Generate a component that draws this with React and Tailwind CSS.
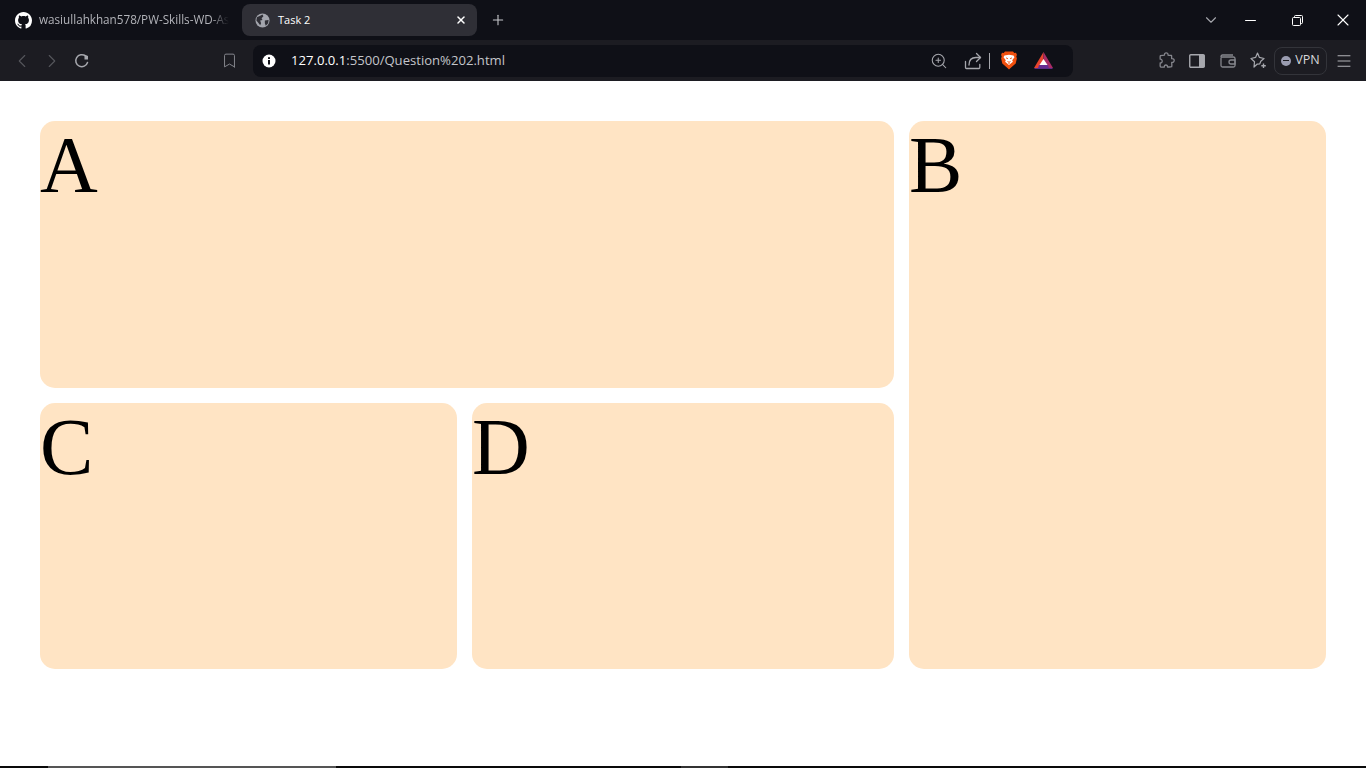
import React from 'react';
import { ChevronLeft, ChevronRight, ChevronDown, Bookmark, Plus, X, Minus, ZoomIn, Menu } from 'lucide-react';

const GithubMark = () => (
  <svg width="17" height="17" viewBox="0 0 16 16" fill="#ffffff">
    <path d="M8 0C3.58 0 0 3.58 0 8c0 3.54 2.29 6.53 5.47 7.59.4.07.55-.17.55-.38 0-.19-.01-.82-.01-1.49-2.01.37-2.53-.49-2.69-.94-.09-.23-.48-.94-.82-1.13-.28-.15-.68-.52-.01-.53.63-.01 1.08.58 1.23.82.72 1.21 1.87.87 2.33.66.07-.52.28-.87.51-1.07-1.78-.2-3.64-.89-3.64-3.95 0-.87.31-1.59.82-2.15-.08-.2-.36-1.02.08-2.12 0 0 .67-.21 2.2.82.64-.18 1.32-.27 2-.27s1.36.09 2 .27c1.53-1.04 2.2-.82 2.2-.82.44 1.1.16 1.92.08 2.12.51.56.82 1.27.82 2.15 0 3.07-1.87 3.75-3.65 3.95.29.25.54.73.54 1.48 0 1.07-.01 1.93-.01 2.2 0 .21.15.46.55.38A8.01 8.01 0 0 0 16 8c0-4.42-3.58-8-8-8z" />
  </svg>
);

const GlobeFilled = () => (
  <svg width="15" height="15" viewBox="0 0 16 16">
    <circle cx="8" cy="8" r="7.5" fill="#a3a5ad" />
    <path d="M2 4.500 5.500 3 8 1.500 9 3.500 7 5.500 8 7.500 5.500 8 6.500 11 5.500 13 3.500 10.500 1.500 8zM10.500 8 14.500 7.500 14 11 11.500 13.500 10.500 11z" fill="#2f2f36" />
  </svg>
);

const InfoDot = () => (
  <svg width="14" height="14" viewBox="0 0 14 14">
    <circle cx="7" cy="7" r="6.500" fill="#ffffff" />
    <rect x="6" y="6" width="2" height="4.500" fill="#0f1017" />
    <rect x="6" y="3.200" width="2" height="1.800" fill="#0f1017" />
  </svg>
);

const ReloadIcon = () => (
  <svg width="16" height="16" viewBox="0 0 16 16" fill="none" stroke="#a6a7ad" strokeWidth="1.500" strokeLinecap="round">
    <path d="M13.500 9.500A6 6 0 1 1 11.500 3" />
    <path d="M10.500 1.500 14 3v3.500h-3.500z" fill="#a6a7ad" stroke="none" />
  </svg>
);

const ShareIcon = () => (
  <svg width="18" height="18" viewBox="0 0 18 18" fill="none" stroke="#a6a7ad" strokeWidth="1.300" strokeLinecap="round" strokeLinejoin="round">
    <path d="M1.500 9.500v6a1 1 0 0 0 1 1h12.500a1 1 0 0 0 .8-1v-3" />
    <path d="M5 13c0-5 3-7.500 7-7.500h4.500" />
    <path d="M12.500 1.500l4 4-4 4" />
  </svg>
);

const BraveLogo = () => (
  <svg width="16" height="19" viewBox="0 0 16 19">
    <path d="M4 .5h8l1.300 1.500 1.700-.3.9 2-.6 2 .6 1.600-1.200 5.200-4 3.600L8 18.500l-2.700-2.400-4-3.600L.1 7.300l.6-1.600-.6-2 .9-2 1.700.3z" fill="#f1500e" />
    <path d="M3.500 4.500 8 3.800l4.500.7 1 1.800-2.300 3 .7 1.500-3.900 3.200-3.900-3.200.7-1.500-2.300-3z" fill="#ffffff" />
    <path d="M5 6.800 7 7.800M11 6.800 9 7.800M6.500 10 8 11.500 9.500 10M8 11.500v1.500" stroke="#f1500e" strokeWidth="0.900" fill="none" />
  </svg>
);

const BatLogo = () => (
  <svg width="19" height="17" viewBox="0 0 19 17">
    <path d="M9.500 0 0 16h5.500L9.500 9z" fill="#e8442d" />
    <path d="M9.500 0 19 16h-5.500L9.500 9z" fill="#a92c66" />
    <path d="M0 16h19l-1 1H1z" fill="#5c2a86" />
    <path d="M5 13h9l.9 3H4z" fill="#662d91" />
    <path d="M9.500 7 13.500 13h-8z" fill="#ffffff" />
  </svg>
);

const PuzzleIcon = () => (
  <svg width="17" height="17" viewBox="0 0 17 17" fill="none" stroke="#85868d" strokeWidth="1.300" strokeLinejoin="round">
    <path d="M6.500 3.200C6.200 1.600 7.200.8 8.200.8s2.100.9 1.800 2.400c1.300.3 2.500.2 3.500.3.200 1 .1 2.100.2 3.200 1.500-.3 2.500.7 2.500 1.800s-1 2.200-2.500 1.900c0 1.500.4 3 0 4.300-1.500.5-3 .2-4.200.3.100-1.300-.6-2-1.600-2s-1.800.7-1.600 2c-1.300 0-2.700.3-3.900-.2-.6-1.300-.1-2.700-.2-4 1.200.2 2-.6 2-1.600S3.400 6.900 2.200 7.100c0-1.200-.3-2.400.2-3.500 1.300-.5 2.800-.2 4.100-.4z" />
  </svg>
);

const SidebarIcon = () => (
  <svg width="16" height="14" viewBox="0 0 16 14">
    <rect x="0.750" y="0.750" width="14.500" height="12.500" rx="1" fill="none" stroke="#a6a7ad" strokeWidth="1.400" />
    <rect x="10" y="1" width="5.500" height="12" fill="#a6a7ad" />
  </svg>
);

const WalletIcon = () => (
  <svg width="16" height="14" viewBox="0 0 16 14" fill="none" stroke="#85868d" strokeWidth="1.300">
    <path d="M1 3.500V11.500A1.500 1.500 0 0 0 2.500 13h11a1.500 1.500 0 0 0 1.500-1.500V4.500A1.500 1.500 0 0 0 13.500 3H2.500A1.500 1.500 0 0 1 1 2.500 1.500 1.500 0 0 1 2.500 1H13" />
    <path d="M15 6h-4a2 2 0 0 0 0 4h4z" />
  </svg>
);

const SparkleIcon = () => (
  <svg width="17" height="17" viewBox="0 0 17 17" fill="none" stroke="#a6a7ad" strokeWidth="1.200" strokeLinejoin="round">
    <path d="M7.500 1 9.300 5.300 14 6.500 10.800 9.200 9.800 11.800 7 12.200 4 15 4.500 9.800 1 6.500 5.700 5.300z" />
    <path d="M13.500 11.500v4.500M11.300 13.700h4.500" strokeWidth="1.400" />
  </svg>
);

const RestoreIcon = () => (
  <svg width="11" height="11" viewBox="0 0 11 11" fill="none" stroke="#ffffff" strokeWidth="1">
    <rect x="0.500" y="2.500" width="8" height="8" rx="1" />
    <path d="M2.500 2.500V1.500a1 1 0 0 1 1-1h6a1 1 0 0 1 1 1v6a1 1 0 0 1-1 1h-1" />
  </svg>
);

const Card = ({ label, className }) => (
  <div className={`bg-[#ffe4c4] rounded-[15px] text-[80px] leading-[88px] ${className}`}>{label}</div>
);

export default function App() {
  return (
    <div className="h-screen flex flex-col overflow-hidden bg-white font-['Liberation_Serif',serif]">
      {/* tab strip */}
      <div className="h-10 shrink-0 bg-[#0f1017] flex items-center font-['Open_Sans',sans-serif] text-xs">
        <div className="w-[242px] shrink-0 flex items-center pl-[15px] gap-[7px]">
          <GithubMark />
          <span className="whitespace-nowrap text-[#b3b4ba] text-[11.7px] [mask-image:linear-gradient(to_right,black_90%,transparent)]">wasiullahkhan578/PW-Skills-WD-As</span>
        </div>
        <div className="w-[235px] h-8 shrink-0 rounded-lg bg-[#2f2f36] flex items-center pl-[13px] pr-[10px] gap-[8px]">
          <GlobeFilled />
          <span className="flex-1 text-white text-[11px]">Task 2</span>
          <X size={12} strokeWidth={3} color="#ffffff" />
        </div>
        <Plus size={16} strokeWidth={1.6} color="#c9cacf" className="ml-[13px]" />
        <ChevronDown size={18} strokeWidth={1.5} color="#a6a7ad" className="ml-[696px]" />
        <Minus size={17} strokeWidth={1.5} color="#ffffff" className="ml-[22px]" />
        <div className="ml-[33px]"><RestoreIcon /></div>
        <X size={20} strokeWidth={1.3} color="#ffffff" className="ml-[30px]" />
      </div>

      {/* toolbar */}
      <div className="h-[41px] shrink-0 bg-[#1c1c22] flex items-center font-['Open_Sans',sans-serif]">
        <ChevronLeft size={22} strokeWidth={1.2} color="#55565c" className="ml-[11px]" />
        <ChevronRight size={22} strokeWidth={1.2} color="#55565c" className="ml-[8px]" />
        <div className="ml-[11px]"><ReloadIcon /></div>
        <Bookmark size={17} strokeWidth={1.4} color="#85868d" className="ml-[131px]" />
        <div className="ml-[15px] w-[820px] h-8 rounded-lg bg-[#0f1017] flex items-center pl-[9px] text-[13.1px]">
          <InfoDot />
          <span className="ml-[15px] w-[631px] whitespace-nowrap text-[#c4c5ca]"><span className="text-white">127.0.0.1</span>:5500/Question%202.html</span>
          <ZoomIn size={18} strokeWidth={1.4} color="#a6a7ad" className="ml-[8px]" />
          <div className="ml-[16px]"><ShareIcon /></div>
          <div className="ml-[7px] w-px h-4 bg-[#a6a7ad]" />
          <div className="ml-[11px]"><BraveLogo /></div>
          <div className="ml-[17px]"><BatLogo /></div>
        </div>
        <div className="ml-[85px]"><PuzzleIcon /></div>
        <div className="ml-[14px]"><SidebarIcon /></div>
        <div className="ml-[15px]"><WalletIcon /></div>
        <div className="ml-[14px]"><SparkleIcon /></div>
        <div className="ml-[7px] w-[53px] h-7 rounded-lg border border-[#33343a] flex items-center justify-center gap-[4px] text-[12.5px] text-[#d5d6da]">
          <span className="w-[10px] h-[10px] rounded-full bg-[#9a9cb0] flex items-center justify-center">
            <span className="w-[6px] h-px bg-[#1c1c22]" />
          </span>
          VPN
        </div>
        <Menu size={18} strokeWidth={1.2} color="#c4c5ca" className="ml-[8px]" />
      </div>

      {/* page */}
      <div className="flex-1 p-10">
        <div className="grid grid-cols-[417px_422px_417px] grid-rows-[267px_266px] gap-[15px] w-[1286px]">
          <Card label="A" className="col-span-2" />
          <Card label="B" className="row-span-2" />
          <Card label="C" />
          <Card label="D" />
        </div>
      </div>

      {/* bottom edge */}
      <div className="h-[2px] shrink-0 bg-[#0a0a0a] flex">
        <div className="ml-[48px] w-[288px] bg-[#555555]" />
        <div className="ml-[345px] w-[47px] bg-[#333333]" />
      </div>
    </div>
  );
}
